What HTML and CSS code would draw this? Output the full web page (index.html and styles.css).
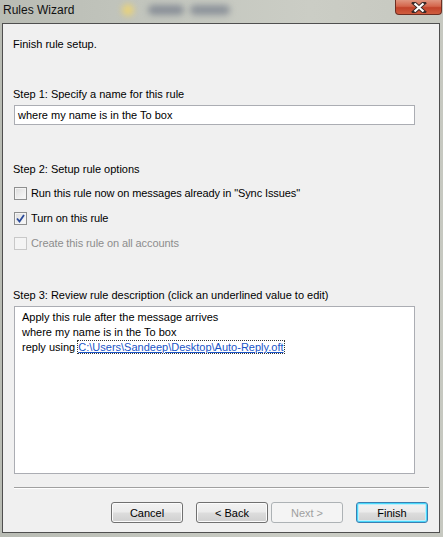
FILE: index.html
```html
<!DOCTYPE html>
<html lang="en">
<head>
    <meta charset="UTF-8">
    <title>Rules Wizard</title>
    <link rel="stylesheet" href="styles.css">
</head>
<body>
    <div class="window">
        <div class="title-bar">
            <span class="title">Rules Wizard</span>
            <div class="glass-blob sun"></div>
            <div class="glass-blob word1"></div>
            <div class="glass-blob word2"></div>
            <div class="close-btn">
                <svg width="16" height="11" viewBox="0 0 16 11">
                    <path d="M3 1 L13 10 M13 1 L3 10" stroke="#3a2a28" stroke-width="4" stroke-linecap="square"/>
                    <path d="M3.5 1.5 L12.5 9.5 M12.5 1.5 L3.5 9.5" stroke="#fff" stroke-width="2.2"/>
                </svg>
            </div>
        </div>

        <div class="client">
            <p class="intro">Finish rule setup.</p>

            <div class="step step-one">
                <label>Step 1: Specify a name for this rule</label>
                <div class="text-field">where my name is in the To box</div>
            </div>

            <div class="step step-two">
                <label>Step 2: Setup rule options</label>
                <div class="options">
                    <div class="option">
                        <span class="check"></span>
                        <span>Run this rule now on messages already in "Sync Issues"</span>
                    </div>
                    <div class="option">
                        <span class="check checked">
                            <svg width="9" height="9" viewBox="0 0 9 9"><path d="M1 4.5 L3.5 7.5 L8 1" fill="none" stroke="#2a4a9a" stroke-width="1.8"/></svg>
                        </span>
                        <span>Turn on this rule</span>
                    </div>
                    <div class="option disabled">
                        <span class="check"></span>
                        <span>Create this rule on all accounts</span>
                    </div>
                </div>
            </div>

            <div class="step step-three">
                <label>Step 3: Review rule description (click an underlined value to edit)</label>
                <div class="description">
                    <div>Apply this rule after the message arrives</div>
                    <div>where my name is in the To box</div>
                    <div>reply using <a class="value-link">C:\Users\Sandeep\Desktop\Auto-Reply.oft</a></div>
                </div>
            </div>

            <div class="separator"></div>

            <!-- Wizard buttons -->
            <div class="buttons">
                <button class="btn">Cancel</button>
                <div class="nav-pair">
                    <button class="btn">&lt; Back</button>
                    <button class="btn disabled">Next &gt;</button>
                </div>
                <button class="btn default">Finish</button>
            </div>
        </div>
    </div>
</body>
</html>
```

FILE: styles.css
```css
* {
    margin: 0;
    padding: 0;
    box-sizing: border-box;
}

body {
    width: 443px;
    height: 537px;
    overflow: hidden;
    background: linear-gradient(90deg, #b9bcb4 0%, #c4c7bf 40%, #cbcdc5 70%, #c6c8c0 100%);
    font-family: 'Liberation Sans', Arial, sans-serif;
    font-size: 11px;
    color: #000;
}

.window {
    height: 537px;
    display: flex;
    flex-direction: column;
    padding: 0 3px 4px 2px;
}

.title-bar {
    height: 23px;
    position: relative;
    flex-shrink: 0;
}

.title {
    position: relative;
    display: block;
    padding: 3px 0 0 1px;
    font-size: 12px;
    color: #111;
    z-index: 2;
}

.glass-blob {
    position: absolute;
    filter: blur(3px);
    border-radius: 6px;
}

.sun {
    left: 120px;
    top: 4px;
    width: 12px;
    height: 12px;
    background: #e8d27a;
    border-radius: 50%;
}

.word1 {
    left: 146px;
    top: 5px;
    width: 36px;
    height: 10px;
    background: #8a9098;
}

.word2 {
    left: 188px;
    top: 5px;
    width: 40px;
    height: 10px;
    background: #8d939a;
}

.close-btn {
    position: absolute;
    right: -2px;
    top: 0;
    width: 47px;
    height: 15px;
    background: linear-gradient(#e0957f 0%, #d4664c 45%, #c2432a 55%, #cf5d3f 100%);
    border: 1px solid #6e2e22;
    border-top: none;
    border-radius: 0 0 4px 4px;
    display: flex;
    align-items: center;
    justify-content: center;
}

.client {
    flex: 1;
    background: #f0f0f0;
    border: 1px solid #4f4f4f;
    padding: 13px 11px 0 10px;
    display: flex;
    flex-direction: column;
}

.intro,
.step label {
    display: block;
    line-height: 14px;
}

.step-one {
    margin-top: 36px;
}

.text-field {
    margin: 4px 0 0 1px;
    width: 401px;
    height: 20px;
    background: #fff;
    border: 1px solid #abadb3;
    padding: 2px 3px;
    line-height: 14px;
}

.step-two {
    margin-top: 37px;
}

.options {
    margin-top: 10px;
    display: flex;
    flex-direction: column;
    gap: 11px;
    padding-left: 1px;
}

.option {
    display: flex;
    align-items: center;
    gap: 4px;
    height: 14px;
    letter-spacing: -0.1px;
}

.check {
    width: 13px;
    height: 13px;
    border: 1px solid #8e8f8f;
    background: linear-gradient(135deg, #dcdcdc, #fbfbfb);
    box-shadow: inset 0 0 0 1px #f4f4f4;
    display: flex;
    align-items: center;
    justify-content: center;
}

.option.disabled {
    color: #8d8d8d;
}

.option.disabled .check {
    border-color: #c8c8c8;
    background: #f4f4f4;
}

.step-three {
    margin-top: 38px;
}

.description {
    margin: 4px 0 0 1px;
    width: 401px;
    height: 168px;
    background: #fff;
    border: 1px solid #abadb3;
    padding: 3px 7px;
    line-height: 15px;
}

.value-link {
    color: #1a55c8;
    text-decoration: underline;
    outline: 1px dotted #333;
    outline-offset: 0;
}

.separator {
    margin: 13px 0 0 1px;
    height: 2px;
    width: 415px;
    border-top: 1px solid #a0a0a0;
    border-bottom: 1px solid #fff;
}

.buttons {
    margin-top: 13px;
    display: flex;
    justify-content: flex-end;
    gap: 13px;
}

.nav-pair {
    display: flex;
    gap: 3px;
}

.btn {
    width: 72px;
    height: 21px;
    font-family: 'Liberation Sans', Arial, sans-serif;
    font-size: 11px;
    color: #000;
    border: 1px solid #707070;
    border-radius: 3px;
    background: linear-gradient(#f2f2f2 0%, #ebebeb 48%, #dddddd 52%, #cfcfcf 100%);
    box-shadow: inset 0 0 0 1px #fbfbfb;
}

.btn.disabled {
    color: #a0a0a0;
    border-color: #adb2b5;
    background: #f4f4f4;
    box-shadow: none;
}

.btn.default {
    border-color: #3c7fb1;
    box-shadow: inset 0 0 0 1px #48d8fb, inset 0 0 0 2px #bdeefb;
}
```
